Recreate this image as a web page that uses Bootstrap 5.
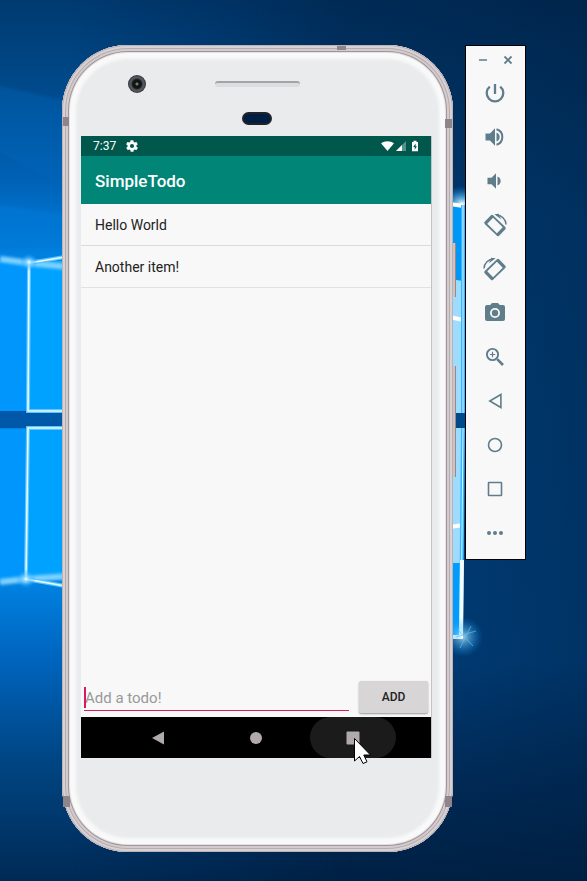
<!DOCTYPE html>
<html lang="en">
<head>
<meta charset="utf-8">
<meta name="viewport" content="width=device-width, initial-scale=1">
<title>SimpleTodo</title>
<link href="https://cdn.jsdelivr.net/npm/bootstrap@5.3.0/dist/css/bootstrap.min.css" rel="stylesheet">
<style>
  body { font-family: Roboto, "Liberation Sans", sans-serif; background: #00274f; color: #222; }
  .desk { padding: 45px 61px 29px 62px; gap: 12px; }
  .wallpaper { z-index: -1; }

  /* phone shell */
  .phone {
    border-radius: 66px; padding: 91px 22px 94px 19px; background: #e9ebed;
    box-shadow: inset 0 0 0 1px #bcb2b5, inset 0 0 0 3px #d9d2d4, inset 0 0 0 4px #b5adb0,
      inset 0 0 0 6px #d3cccf, inset 0 0 0 7px #a0959a, inset 0 0 0 8px #e4e2e3,
      inset 0 0 3px 14px #f9f9f9;
  }
  .face { top: 0; left: 0; right: 0; height: 91px; }
  .lens { left: 66px; top: 30px; width: 18px; height: 18px; border-radius: 50%;
    background: radial-gradient(circle, #8a7a2c 0 1px, #0b1520 2px 4px, #25292f 5px, #55575c 6px 7px, #333 9px); }
  .speaker { left: 153px; top: 36px; width: 85px; height: 6px; border-radius: 3px; background: #dcdddf; border-top: 2px solid #a3a4a7; }
  .sensor { left: 180px; top: 67px; width: 30px; height: 13px; border-radius: 7px; background: #001e44; border: 2px solid #222326; }
  .seam { background: #8e8489; }
  .seam-a { left: 1px; top: 72px; width: 6px; height: 9px; }
  .seam-b { right: 1px; top: 74px; width: 7px; height: 9px; }
  .seam-c { left: 1px; bottom: 45px; width: 7px; height: 11px; }
  .seam-d { right: 1px; bottom: 45px; width: 7px; height: 11px; }
  .seam-e { left: 275px; top: 1px; width: 9px; height: 4px; }
  .side-key { right: -3px; width: 3px; background: #cfc3c2; border-right: 1px solid #94898b; }
  .key-power { top: 198px; height: 54px; }
  .key-volume { top: 321px; height: 111px; }

  /* app */
  .screen { background: #f8f8f8; box-shadow: 1px 0 #c4c2c5; }
  .status { height: 20px; background: #00574b; padding: 0 11px 0 12px; font-size: 12px; line-height: 20px; }
  .status-gap { gap: 9px; }
  .appbar { height: 48px; background: #008577; padding: 2px 14px 0; }
  .appbar h1 { font-size: 17px; line-height: 24px; font-weight: 500; }
  .todos .list-group-item { background: transparent; color: #222; font-size: 14px; line-height: 21px; padding: 11px 14px 9px; border-color: #dadada; border-width: 0 0 1px; }
  .entry { padding: 0 3px 4px; gap: 10px; }
  .entry-box { margin-bottom: 2px; border-bottom: 1px solid #d81b60; }
  .entry-box input { height: 28px; font-size: 15px; line-height: 24px; padding: 4px 0 0 1px; color: #222; caret-color: #d81b60; outline: 0; }
  .entry-box input::placeholder { color: #999; opacity: 1; }
  .caret { left: 0; bottom: 2px; width: 2px; height: 21px; background: #d81b60; }
  .add { width: 69px; height: 32px; border-radius: 2px; background: #d8d5d6; color: #222; font-size: 12px; font-weight: 500; line-height: 16px; box-shadow: 0 1px 2px #999; }
  .navkeys { height: 41px; background: #000; gap: 11px; }
  .navkeys button { width: 86px; border-radius: 21px; background: transparent; }
  .navkeys .pressed { background: #1b1b1b; }
  .pointer { left: 43px; top: 20px; z-index: 2; }

  /* emulator tool strip */
  .tools { width: 61px; background: #f8f8f8; border: 1px solid #000; padding: 0 1px 4px 0; }
  .tools-head { height: 25px; gap: 13px; padding-top: 3px; }
  .tools button { background: transparent; color: #607d8b; }
  .tool { height: 44px; }
  svg { display: block; }
</style>
<script src="https://cdn.jsdelivr.net/npm/bootstrap@5.3.0/dist/js/bootstrap.bundle.min.js"></script>
</head>
<body class="position-relative min-vh-100">
<svg class="wallpaper position-absolute top-0 start-0 w-100 h-100" viewBox="0 0 587 881" preserveAspectRatio="none" aria-hidden="true">
  <defs>
    <linearGradient id="base" x1="0" y1="0" x2="0" y2="1">
      <stop offset="0" stop-color="#002c59"/><stop offset=".1" stop-color="#003568"/><stop offset=".25" stop-color="#00407b"/>
      <stop offset=".5" stop-color="#004482"/><stop offset=".75" stop-color="#004586"/><stop offset=".88" stop-color="#002f60"/><stop offset="1" stop-color="#002145"/>
    </linearGradient>
    <linearGradient id="left" x1="0" y1="0" x2="0" y2="1">
      <stop offset="0" stop-color="#003a70"/><stop offset=".1" stop-color="#004a8b"/><stop offset=".2" stop-color="#0060b4"/><stop offset=".3" stop-color="#0084e6"/>
      <stop offset=".66" stop-color="#0082e2"/><stop offset=".75" stop-color="#0064bd"/><stop offset=".86" stop-color="#004684"/><stop offset="1" stop-color="#002a56"/>
    </linearGradient>
    <linearGradient id="fade"><stop offset="0" stop-color="#fff"/><stop offset=".12" stop-color="#fff"/><stop offset=".6" stop-color="#fff" stop-opacity="0"/></linearGradient>
    <linearGradient id="dark"><stop offset=".4" stop-color="#001d3d" stop-opacity="0"/><stop offset="1" stop-color="#001d3d" stop-opacity=".45"/></linearGradient>
    <mask id="m"><rect width="587" height="881" fill="url(#fade)"/></mask>
    <radialGradient id="glow"><stop offset="0" stop-color="#fff"/><stop offset=".25" stop-color="#8fdcff" stop-opacity=".8"/><stop offset="1" stop-color="#0090ff" stop-opacity="0"/></radialGradient>
    <filter id="soft" x="-20%" y="-20%" width="140%" height="140%"><feGaussianBlur stdDeviation="1.5"/></filter>
  </defs>
  <rect width="587" height="881" fill="url(#base)"/>
  <rect width="587" height="881" fill="url(#left)" mask="url(#m)"/>
  <rect width="587" height="881" fill="url(#dark)"/>
  <path d="M-5 85 L70 102 V190 L-5 150Z" fill="#0068bd" opacity=".35" filter="url(#soft)"/>
  <path d="M-5 204 L70 214 V245 L-5 250Z" fill="#0078d6" opacity=".6" filter="url(#soft)"/>
  <path d="M0 260 L30 266 V411 H0Z" fill="#0096fc"/>
  <path d="M0 429 H28 V579 L0 582Z" fill="#0096fc"/>
  <path d="M30 264 L70 260 V411 H30Z M28 428 H70 V580 L27 579Z" fill="#00a2ff"/>
  <rect y="411" width="70" height="17" fill="#0058a9"/>
  <path d="M0 259 L29 263 L70 267 M0 582 L27 579 L70 576" fill="none" stroke="#7fd2ff" stroke-width="6" filter="url(#soft)"/>
  <path d="M29 263 L65 257 M29 263 L28 411 H65 M65 428 H28 L26 579 L65 586" fill="none" stroke="#5cc4ff" stroke-width="4"/>
  <path d="M29 263 L65 257 M29 263 L28 411 H65 M65 428 H28 L26 579 L65 586" fill="none" stroke="#e6fbff" stroke-width="1.6"/>
  <circle cx="29" cy="262" r="9" fill="url(#glow)"/><circle cx="26" cy="579" r="10" fill="url(#glow)"/>
  <ellipse cx="462" cy="204" rx="22" ry="18" fill="url(#glow)"/>
  <path d="M450 204 H463 V413 H450Z" fill="#0098f8"/>
  <path d="M450 279 L463 281 V413 H450Z M450 428 H463 V563 H450Z" fill="#9edcff"/>
  <path d="M450 563 H463 V637 H450Z" fill="#009cff"/>
  <path d="M450 204 L463 206 M450 317 L463 320 M450 527 L463 525" stroke="#fff" stroke-width="4"/>
  <path d="M463 205 V413 M463 428 L461 637" stroke="#37b7ff" stroke-width="4"/>
  <path d="M463 205 V413 M463 428 L461 637" stroke="#d7f5ff" stroke-width="1"/>
  <path d="M462 560 L461 637 H450" stroke="#f4fdff" stroke-width="4" fill="none"/>
  <rect x="450" y="413" width="16" height="15" fill="#00498b"/>
  <circle cx="463" cy="637" r="20" fill="url(#glow)" opacity=".7"/>
  <path d="M456 637 L476 631 M458 630 L473 646 M460 648 L471 626" stroke="#57c1ff" stroke-width="1" opacity=".7"/>
</svg>

<div class="desk d-flex align-items-start min-vh-100">
  <main class="phone position-relative d-flex flex-column flex-grow-1 align-self-stretch">
    <div class="face position-absolute" aria-hidden="true">
      <span class="lens position-absolute"></span><span class="speaker position-absolute"></span><span class="sensor position-absolute"></span>
    </div>
    <i class="seam seam-a position-absolute"></i><i class="seam seam-b position-absolute"></i>
    <i class="seam seam-c position-absolute"></i><i class="seam seam-d position-absolute"></i><i class="seam seam-e position-absolute"></i>
    <i class="side-key key-power position-absolute"></i><i class="side-key key-volume position-absolute"></i>

    <div class="screen d-flex flex-column flex-grow-1">
      <div class="status d-flex justify-content-between align-items-center text-white">
        <div class="status-gap d-flex align-items-center">
          <span>7:37</span>
          <svg width="14" height="14" viewBox="0 0 24 24" fill="#fff" aria-hidden="true"><path d="M19.4 13c0-.3.1-.6.1-1s0-.7-.1-1l2.1-1.7c.2-.2.3-.4.1-.6l-2-3.5c-.1-.2-.4-.3-.6-.2l-2.5 1c-.5-.4-1.100-.7-1.700-1l-.4-2.600c0-.2-.2-.4-.5-.4h-4c-.2 0-.5.2-.5.4l-.4 2.600c-.6.3-1.200.6-1.700 1l-2.500-1c-.2-.1-.5 0-.6.2l-2 3.500c-.1.2-.1.4.1.6L4.600 11c0 .3-.1.6-.1 1s0 .7.1 1l-2.100 1.700c-.2.2-.3.4-.1.6l2 3.500c.1.2.4.3.6.2l2.500-1c.5.4 1.100.7 1.700 1l.4 2.600c0 .2.3.4.5.4h4c.3 0 .5-.2.5-.4l.4-2.600c.6-.3 1.200-.6 1.700-1l2.500 1c.2.1.5 0 .6-.2l2-3.500c.2-.2.1-.4-.1-.6zM12 15.500a3.500 3.500 0 1 1 0-7 3.500 3.500 0 0 1 0 7z"/></svg>
        </div>
        <svg width="40" height="12" viewBox="0 0 40 12" aria-hidden="true">
          <path d="M1 3.300C4.600.4 10.400.4 14 3.300L7.500 11Z" fill="#fff"/>
          <path d="M26 1V11H16Z" fill="#fff" fill-opacity=".35"/><path d="M22 5V11H16Z" fill="#fff"/>
          <path fill-rule="evenodd" d="M32 2h1.500V.8h3V2H38v9.200h-6ZM35.600 3.500 33.200 7h1.500v2.800L37 6.200h-1.400Z" fill="#fff"/>
        </svg>
      </div>
      <header class="appbar d-flex align-items-center"><h1 class="m-0 text-white">SimpleTodo</h1></header>
      <ul class="todos list-group list-group-flush flex-grow-1">
        <li class="list-group-item">Hello World</li>
        <li class="list-group-item border-bottom">Another item!</li>
      </ul>
      <form class="entry d-flex align-items-end" onsubmit="return false">
        <div class="entry-box position-relative flex-grow-1">
          <input class="d-block w-100 border-0 bg-transparent" type="text" placeholder="Add a todo!" aria-label="Add a todo!">
          <span class="caret position-absolute"></span>
        </div>
        <button class="add border-0 p-0" type="submit">ADD</button>
      </form>
      <nav class="navkeys d-flex justify-content-center" aria-label="System">
        <button class="border-0 p-0 d-flex align-items-center justify-content-center" type="button" aria-label="Back"><svg width="14" height="14"><path d="M12 .5v13L0 7Z" fill="#b0aaab"/></svg></button>
        <button class="border-0 p-0 d-flex align-items-center justify-content-center" type="button" aria-label="Home"><svg width="14" height="14"><circle cx="7" cy="7" r="6" fill="#b0aaab"/></svg></button>
        <button class="pressed position-relative border-0 p-0 d-flex align-items-center justify-content-center" type="button" aria-label="Overview"><svg width="14" height="14"><rect x=".5" y=".5" width="13" height="13" rx="1" fill="#b0aaab"/></svg>
          <svg class="pointer position-absolute" width="20" height="28" viewBox="0 0 20 28"><path d="M1.500 1.500V24L6.500 19.500 10 26.500 14 24.800 10.800 18H17.500Z" fill="#fff" stroke="#000"/></svg></button>
      </nav>
    </div>
  </main>

  <aside class="tools flex-shrink-0" aria-label="Emulator controls">
    <div class="tools-head d-flex justify-content-center align-items-center">
      <button class="border-0 p-0" type="button" aria-label="Minimize"><svg width="12" height="12"><path d="M2 6h8" stroke="currentColor" stroke-width="1.500"/></svg></button>
      <button class="border-0 p-0" type="button" aria-label="Close"><svg width="12" height="12"><path d="M2.500 2.500 9.500 9.500M9.500 2.500 2.500 9.500" stroke="currentColor" stroke-width="1.800"/></svg></button>
    </div>
    <button class="tool w-100 border-0 p-0 d-flex align-items-center justify-content-center" type="button" aria-label="Power"><svg width="24" height="24" fill="none" stroke="currentColor" stroke-width="2.300"><path d="M12 3v10M6.800 5.600a8.300 8.300 0 1 0 10.400 0"/></svg></button>
    <button class="tool w-100 border-0 p-0 d-flex align-items-center justify-content-center" type="button" aria-label="Volume up"><svg width="24" height="24" fill="currentColor"><path d="M2.500 8.500h4.500l5-5.200v17.400L7 15.500H2.500ZM13.500 7.500a4.800 4.800 0 0 1 0 9Z"/><path d="M13.500 4.300a8 8 0 0 1 0 15.400" fill="none" stroke="currentColor" stroke-width="2"/></svg></button>
    <button class="tool w-100 border-0 p-0 d-flex align-items-center justify-content-center" type="button" aria-label="Volume down"><svg width="24" height="24" fill="currentColor"><path d="M4.500 8.700h4l4.500-4.500v15.600l-4.500-4.500h-4ZM14.500 7.500a4.800 4.800 0 0 1 0 9Z"/></svg></button>
    <button class="tool w-100 border-0 p-0 d-flex align-items-center justify-content-center" type="button" aria-label="Rotate left"><svg width="24" height="24" fill="currentColor"><g id="tilt"><path transform="translate(12 12.500) rotate(44)" fill-rule="evenodd" d="M-8.500-6h17a1.500 1.500 0 0 1 1.500 1.500v9a1.500 1.500 0 0 1-1.500 1.500h-17a1.500 1.500 0 0 1-1.500-1.500v-9a1.500 1.500 0 0 1 1.500-1.500ZM-6.700-4.200v8.400H6.700v-8.400Z"/><path d="M13.500 2C18.500 2.200 22.800 6 23 11.500" fill="none" stroke="currentColor" stroke-width="1.500"/><path d="M11.300 1.200 16 .8v1.800l2.500 4Z"/></g></svg></button>
    <button class="tool w-100 border-0 p-0 d-flex align-items-center justify-content-center" type="button" aria-label="Rotate right"><svg width="24" height="24" fill="currentColor"><use href="#tilt" transform="translate(24 0) scale(-1 1)"/></svg></button>
    <button class="tool w-100 border-0 p-0 d-flex align-items-center justify-content-center" type="button" aria-label="Take screenshot"><svg width="24" height="24" fill="currentColor"><path fill-rule="evenodd" d="M9 2 7.200 4H4a2 2 0 0 0-2 2v12a2 2 0 0 0 2 2h16a2 2 0 0 0 2-2V6a2 2 0 0 0-2-2h-3.200L15 2ZM12 17a5 5 0 1 1 0-10 5 5 0 0 1 0 10Z"/><circle cx="12" cy="12" r="3.200"/></svg></button>
    <button class="tool w-100 border-0 p-0 d-flex align-items-center justify-content-center" type="button" aria-label="Zoom"><svg width="24" height="24" fill="none" stroke="currentColor"><circle cx="9.500" cy="9.500" r="5.600" stroke-width="1.900"/><path d="M14.200 14.200 20 20" stroke-width="2.600"/><path d="M9.500 6.800v5.400M6.800 9.500h5.400" stroke-width="1.200"/></svg></button>
    <button class="tool w-100 border-0 p-0 d-flex align-items-center justify-content-center" type="button" aria-label="Back"><svg width="24" height="24" fill="none" stroke="currentColor" stroke-width="1.600"><path d="M17.900 5.500v13L6.800 12Z"/></svg></button>
    <button class="tool w-100 border-0 p-0 d-flex align-items-center justify-content-center" type="button" aria-label="Home"><svg width="24" height="24" fill="none" stroke="currentColor" stroke-width="1.600"><circle cx="12" cy="12" r="6.500"/></svg></button>
    <button class="tool w-100 border-0 p-0 d-flex align-items-center justify-content-center" type="button" aria-label="Overview"><svg width="24" height="24" fill="none" stroke="currentColor" stroke-width="1.600"><rect x="5.500" y="5.500" width="13" height="13" rx=".5"/></svg></button>
    <button class="tool w-100 border-0 p-0 d-flex align-items-center justify-content-center" type="button" aria-label="More"><svg width="24" height="24" fill="currentColor"><circle cx="6" cy="12" r="2"/><circle cx="12" cy="12" r="2"/><circle cx="18" cy="12" r="2"/></svg></button>
  </aside>
</div>
</body>
</html>
